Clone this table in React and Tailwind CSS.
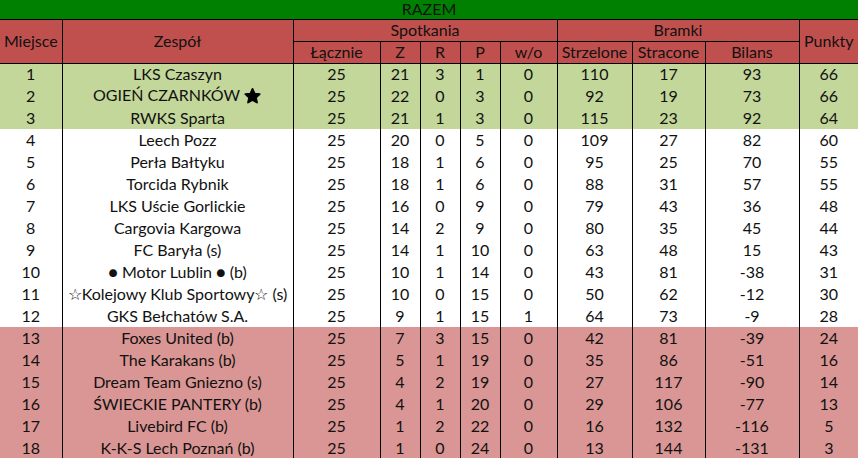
import React from 'react';

const teams = [
    [1, 'LKS Czaszyn', 25, 21, 3, 1, 0, 110, 17, 93, 66],
    [2, 'OGIEŃ CZARNKÓW', 25, 22, 0, 3, 0, 92, 19, 73, 66],
    [3, 'RWKS Sparta', 25, 21, 1, 3, 0, 115, 23, 92, 64],
    [4, 'Leech Pozz', 25, 20, 0, 5, 0, 109, 27, 82, 60],
    [5, 'Perła Bałtyku', 25, 18, 1, 6, 0, 95, 25, 70, 55],
    [6, 'Torcida Rybnik', 25, 18, 1, 6, 0, 88, 31, 57, 55],
    [7, 'LKS Uście Gorlickie', 25, 16, 0, 9, 0, 79, 43, 36, 48],
    [8, 'Cargovia Kargowa', 25, 14, 2, 9, 0, 80, 35, 45, 44],
    [9, 'FC Baryła (s)', 25, 14, 1, 10, 0, 63, 48, 15, 43],
    [10, '● Motor Lublin ● (b)', 25, 10, 1, 14, 0, 43, 81, -38, 31],
    [11, '☆Kolejowy Klub Sportowy☆ (s)', 25, 10, 0, 15, 0, 50, 62, -12, 30],
    [12, 'GKS Bełchatów S.A.', 25, 9, 1, 15, 1, 64, 73, -9, 28],
    [13, 'Foxes United (b)', 25, 7, 3, 15, 0, 42, 81, -39, 24],
    [14, 'The Karakans (b)', 25, 5, 1, 19, 0, 35, 86, -51, 16],
    [15, 'Dream Team Gniezno (s)', 25, 4, 2, 19, 0, 27, 117, -90, 14],
    [16, 'ŚWIECKIE PANTERY (b)', 25, 4, 1, 20, 0, 29, 106, -77, 13],
    [17, 'Livebird FC (b)', 25, 1, 2, 22, 0, 16, 132, -116, 5],
    [18, 'K-K-S Lech Poznań (b)', 25, 1, 0, 24, 0, 13, 144, -131, 3],
];

const widths = [62, 231, 87, 40, 40, 40, 57, 75, 73, 94, 59];

const Star = () => (
    <svg width="19" height="18" viewBox="0 0 24 24" className="inline-block ml-[3px] -mt-[2px] align-middle">
        <path
            d="M12 2.5l2.9 6.2 6.7.8-5 4.6 1.4 6.6L12 17.4l-5.9 3.3 1.4-6.6-5-4.6 6.7-.8z"
            fill="#000"
            stroke="#000"
            strokeWidth="2.4"
            strokeLinejoin="round"
        />
    </svg>
);

const rowBg = (place) => {
    if (place <= 3) return 'bg-[#c4d79b]';
    if (place >= 13) return 'bg-[#da9694]';
    return 'bg-white';
};

const App = () => {
    const th = 'border border-black bg-[#c0504d] font-normal p-0 text-center';

    return (
        <div className="w-[858px] h-[458px] overflow-hidden bg-white text-[#111] text-[16px] leading-none" style={{ fontFamily: 'Lato, "Liberation Sans", sans-serif' }}>
            <table className="table-fixed border-collapse w-[858px]">
                <colgroup>
                    {widths.map((w, i) => (
                        <col key={i} style={{ width: w }} />
                    ))}
                </colgroup>
                <thead>
                    <tr className="h-[19px]">
                        <th colSpan={11} className="bg-[#008000] border-b border-black font-normal p-0 text-center align-top pt-[1px]">
                            RAZEM
                        </th>
                    </tr>
                    <tr className="h-[22px]">
                        <th rowSpan={2} className={`${th} border-l-0`}>Miejsce</th>
                        <th rowSpan={2} className={th}>Zespół</th>
                        <th colSpan={5} className={th}>Spotkania</th>
                        <th colSpan={3} className={th}>Bramki</th>
                        <th rowSpan={2} className={`${th} border-r-0`}>Punkty</th>
                    </tr>
                    <tr className="h-[22px]">
                        <th className={th}>Łącznie</th>
                        <th className={th}>Z</th>
                        <th className={th}>R</th>
                        <th className={th}>P</th>
                        <th className={th}>w/o</th>
                        <th className={th}>Strzelone</th>
                        <th className={th}>Stracone</th>
                        <th className={th}>Bilans</th>
                    </tr>
                </thead>
                <tbody>
                    {teams.map((t) => (
                        <tr key={t[0]} className={`h-[22px] ${rowBg(t[0])}`}>
                            {t.map((v, i) => (
                                <td
                                    key={i}
                                    className={`p-0 text-center whitespace-nowrap border-black ${i === 0 ? '' : 'border-l'}`}
                                >
                                    {v}
                                    {i === 1 && t[0] === 2 && <Star />}
                                </td>
                            ))}
                        </tr>
                    ))}
                </tbody>
            </table>
        </div>
    );
};

export default App;
